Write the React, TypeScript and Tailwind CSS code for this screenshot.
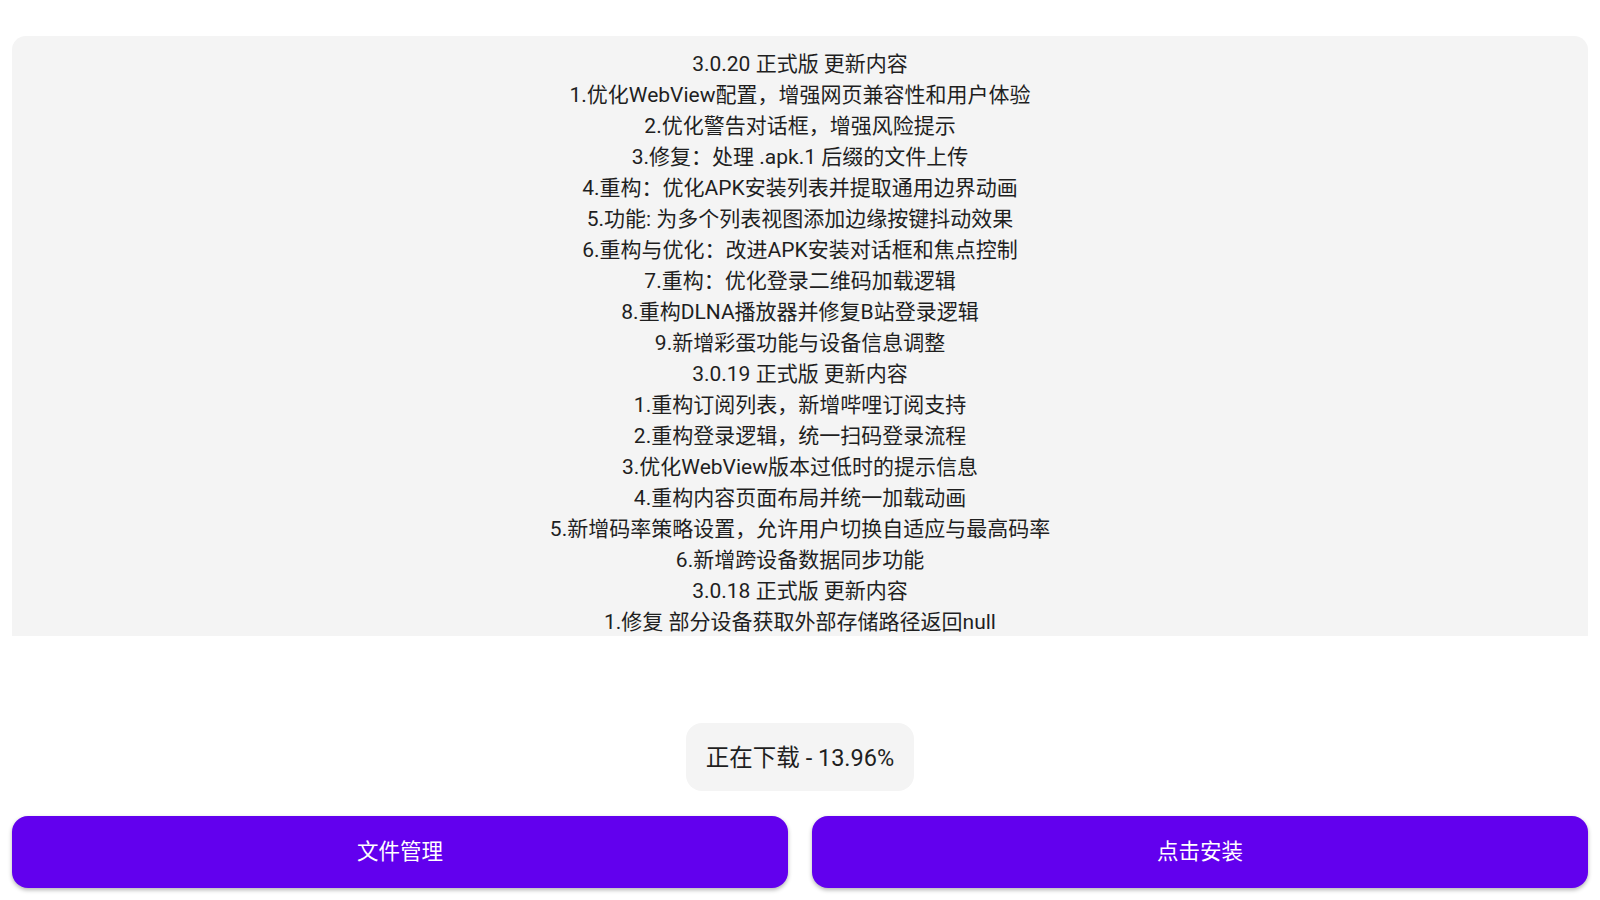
import React from "react";

const lines = [
  "3.0.20 正式版 更新内容",
  "1.优化WebView配置，增强网页兼容性和用户体验",
  "2.优化警告对话框，增强风险提示",
  "3.修复：处理 .apk.1 后缀的文件上传",
  "4.重构：优化APK安装列表并提取通用边界动画",
  "5.功能: 为多个列表视图添加边缘按键抖动效果",
  "6.重构与优化：改进APK安装对话框和焦点控制",
  "7.重构：优化登录二维码加载逻辑",
  "8.重构DLNA播放器并修复B站登录逻辑",
  "9.新增彩蛋功能与设备信息调整",
  "3.0.19 正式版 更新内容",
  "1.重构订阅列表，新增哔哩订阅支持",
  "2.重构登录逻辑，统一扫码登录流程",
  "3.优化WebView版本过低时的提示信息",
  "4.重构内容页面布局并统一加载动画",
  "5.新增码率策略设置，允许用户切换自适应与最高码率",
  "6.新增跨设备数据同步功能",
  "3.0.18 正式版 更新内容",
  "1.修复 部分设备获取外部存储路径返回null",
];

export default function App() {
  return (
    <div
      className="w-[1600px] h-[900px] bg-white flex flex-col text-[#1f1f1f]"
      style={{ fontFamily: 'Roboto, "Noto Sans CJK SC", sans-serif' }}
    >
      <div className="mt-[36px] mx-[12px] h-[600px] bg-[#f4f4f4] rounded-t-[14px] overflow-hidden pt-[13px] flex flex-col items-center">
        {lines.map((l, i) => (
          <div key={i} className="text-[21px] leading-[31px] whitespace-nowrap">
            {l}
          </div>
        ))}
      </div>
      <div className="flex justify-center mt-[87px]">
        <div className="h-[68px] px-[20px] pt-[4px] bg-[#f4f4f4] rounded-[16px] flex items-center text-[23.5px]">
          正在下载 - 13.96%
        </div>
      </div>
      <div className="flex gap-[24px] mx-[12px] mt-[25px]">
        <button className="flex-1 h-[72px] rounded-[16px] bg-[#6200ee] text-white text-[21.5px] shadow-[0_2px_4px_rgba(0,0,0,0.3)] flex items-center justify-center">
          文件管理
        </button>
        <button className="flex-1 h-[72px] rounded-[16px] bg-[#6200ee] text-white text-[21.5px] shadow-[0_2px_4px_rgba(0,0,0,0.3)] flex items-center justify-center">
          点击安装
        </button>
      </div>
    </div>
  );
}
